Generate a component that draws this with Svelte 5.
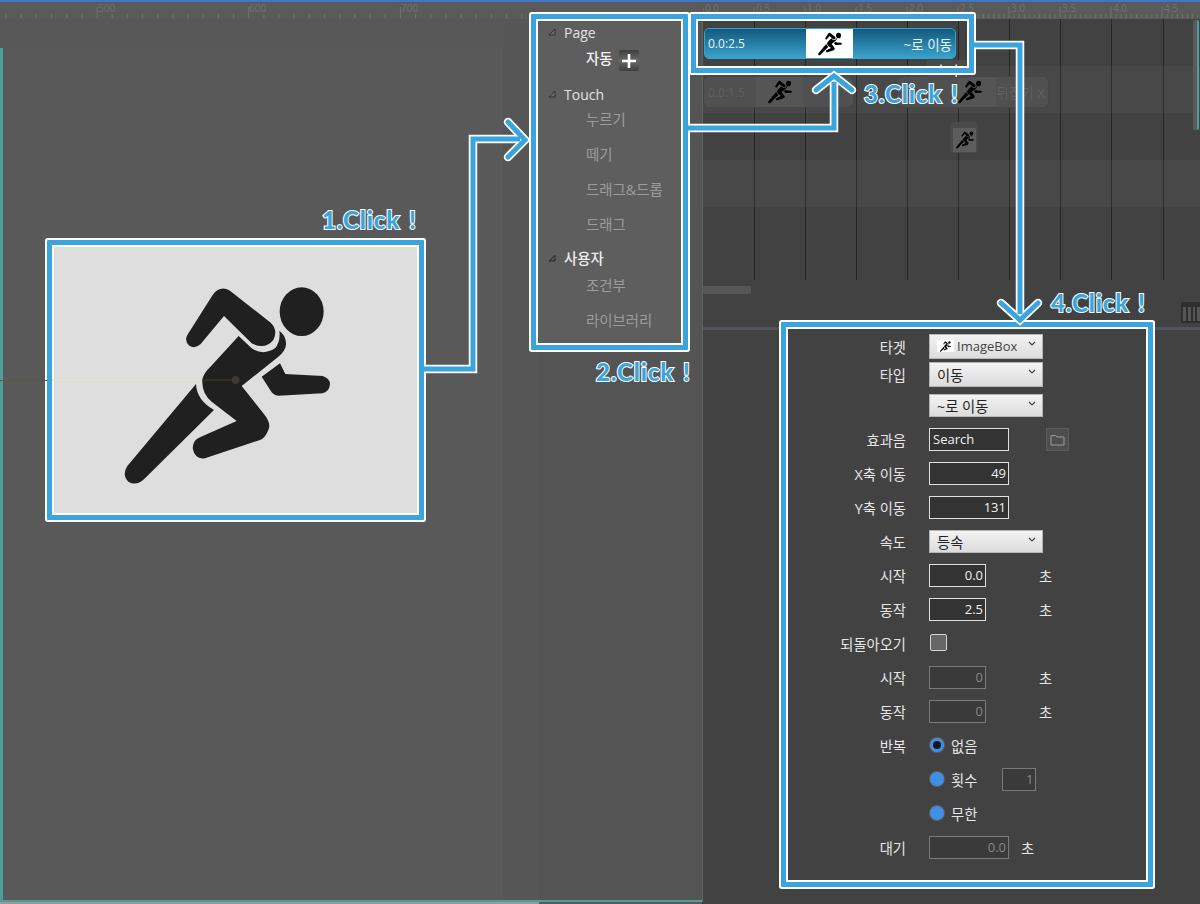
<script>
  const leftTicks = Array.from({ length: 36 }, (_, i) => ({ x: 96 - 90 + i * 15.17, major: (i - 6) % 10 === 0 }));
  const leftLabels = [{ x: 98, t: '500' }, { x: 249, t: '600' }, { x: 401, t: '700' }];
  const rightTicks = Array.from({ length: 100 }, (_, i) => ({ x: i * 5.1, major: i % 10 === 0 }));
  const rightLabels = ['0.0', '0.5', '1.0', '1.5', '2.0', '2.5', '3.0', '3.5', '4.0', '4.5'];
  const gridLines = [51, 102, 153, 204, 255, 306, 357, 408, 460];
</script>

<svg class="defs" width="0" height="0" aria-hidden="true">
  <symbol id="runner" viewBox="280 168 625 600">
    <ellipse cx="815" cy="245" rx="66" ry="73" />
    <path d="M472 315 L548 195 Q570 165 600 182 L722 278 Q745 300 730 330 Q705 360 665 340 L582 258 L512 342 Q495 358 478 347 Q462 332 472 315Z" />
    <path d="M626 318 L665 355 Q700 378 735 355 Q752 335 748 302 Q770 320 768 345 Q765 365 745 380 L635 468 L700 550 Q725 580 715 600 Q705 625 690 630 L525 685 Q495 690 488 655 Q488 630 510 622 L620 573 L545 515 Q515 490 517 450 Q520 430 540 412 Z" />
    <path d="M498 462 Q500 510 552 540 L345 745 Q320 770 295 755 Q275 735 292 708 Z" />
    <path d="M750 400 L766 432 L878 438 Q900 445 900 463 Q898 485 878 490 L745 497 Q730 495 722 482 L695 440 Z" />
  </symbol>
</svg>

<div class="app">
  <header class="rulers">
    <div class="ruler ruler-left">
      <svg width="540" height="17" class="ticks">
        {#each leftTicks as t}
          <line x1={t.x} x2={t.x} y1={t.major ? 5 : 12} y2="16" />
        {/each}
      </svg>
      {#each leftLabels as l}
        <span class="tick-label" style="left:{l.x}px">{l.t}</span>
      {/each}
    </div>
    <div class="ruler">
      <svg width="497" height="17" class="ticks">
        {#each rightTicks as t}
          <line x1={t.x} x2={t.x} y1={t.major ? 5 : 12} y2="16" />
        {/each}
      </svg>
      {#each rightLabels as l, i}
        <span class="tick-label" style="left:{i * 51 + 2}px">{l}</span>
      {/each}
    </div>
  </header>

  <main class="main">
    <section class="canvas">
      <div class="canvas-band"></div>
      <div class="frame image-frame">
        <svg class="runner-art" viewBox="66 45 1101 810">
          <rect x="66" y="448" width="540" height="4" fill="#e6e6bd" />
          <g fill="#202020">
            <use href="#runner" x="280" y="168" width="625" height="600" />
          </g>
          <rect x="517" y="448" width="90" height="4" fill="#3a3a20" />
          <circle cx="617" cy="450" r="13" fill="#3a3a3a" stroke="#33181c" stroke-width="2" />
        </svg>
      </div>
    </section>

    <section class="tools">
      <nav class="frame tree">
        <div class="head first"><svg class="tri" width="8" height="8" viewBox="0 0 8 8"><path d="M1 7L7 1V7Z" fill="#6a6a6a" stroke="#333" /></svg>Page</div>
        <div class="items items-page">
          <div class="item active">자동<span class="plus"><svg width="16" height="16" viewBox="0 0 16 16"><path d="M8 1v14M1 8h14" stroke="#fff" stroke-width="2.6" /></svg></span></div>
        </div>
        <div class="head touch"><svg class="tri" width="8" height="8" viewBox="0 0 8 8"><path d="M1 7L7 1V7Z" fill="#6a6a6a" stroke="#333" /></svg>Touch</div>
        <div class="items items-touch">
          <div class="item">누르기</div>
          <div class="item">떼기</div>
          <div class="item">드래그&드롭</div>
          <div class="item">드래그</div>
        </div>
        <div class="head user"><svg class="tri" width="8" height="8" viewBox="0 0 8 8"><path d="M1 7L7 1V7Z" fill="#555" stroke="#2a2a2a" /></svg><b>사용자</b></div>
        <div class="items items-user">
          <div class="item">조건부</div>
          <div class="item">라이브러리</div>
        </div>
      </nav>
    </section>

    <section class="right">
      <div class="timeline">
        <div class="grid-lines">
          {#each gridLines as x}
            <i class="grid-line" style="left:{x}px"></i>
          {/each}
        </div>
        <div class="track">
          <div class="clip clip-main">
            <span class="clip-time">0.0:2.5</span>
            <span class="clip-icon"><svg width="24" height="24"><use href="#runner" /></svg></span>
            <span class="clip-name">~로 이동</span>
          </div>
        </div>
        <div class="track band">
          <div class="clip clip-dim first-dim">
            <span class="clip-time">0.0:1.5</span>
            <span class="clip-icon"><svg width="24" height="24"><use href="#runner" /></svg></span>
          </div>
          <div class="clip clip-dim second-dim">
            <span class="clip-icon"><svg width="24" height="24"><use href="#runner" /></svg></span>
            <span class="clip-name">뒤집기 X</span>
          </div>
          <span class="fx-tag">효과</span>
        </div>
        <div class="track">
          <div class="tile"><span><svg width="18" height="18"><use href="#runner" /></svg></span></div>
        </div>
        <div class="track band"></div>
        <div class="track"></div>
        <div class="scroll-h"></div>
        <div class="scroll-v"></div>
        <div class="trash"><i></i><i></i><i></i><i></i></div>
      </div>

      <div class="lower">
        <form class="frame props">
          <div class="row h28"><label>타겟</label><div class="select tall"><span class="mini"><svg width="11" height="11"><use href="#runner" /></svg></span><span class="dim">ImageBox</span><svg class="chev" width="8" height="6" viewBox="0 0 8 6"><path d="M1 1l3 3 3-3" fill="none" stroke="#444" stroke-width="1.2" /></svg></div></div>
          <div class="row h28"><label>타입</label><div class="select tall">이동<svg class="chev" width="8" height="6" viewBox="0 0 8 6"><path d="M1 1l3 3 3-3" fill="none" stroke="#444" stroke-width="1.2" /></svg></div></div>
          <div class="row h33"><label></label><div class="select">~로 이동<svg class="chev" width="8" height="6" viewBox="0 0 8 6"><path d="M1 1l3 3 3-3" fill="none" stroke="#444" stroke-width="1.2" /></svg></div></div>
          <div class="row"><label>효과음</label><div class="input wide left">Search</div><span class="folder"><svg width="15" height="13" viewBox="0 0 15 13"><path d="M1 2.5h4.5l1.5 1.5h7v8h-13z" fill="none" stroke="#9a9a9a" /></svg></span></div>
          <div class="row"><label>X축 이동</label><div class="input wide">49</div></div>
          <div class="row"><label>Y축 이동</label><div class="input wide">131</div></div>
          <div class="row"><label>속도</label><div class="select">등속<svg class="chev" width="8" height="6" viewBox="0 0 8 6"><path d="M1 1l3 3 3-3" fill="none" stroke="#444" stroke-width="1.2" /></svg></div></div>
          <div class="row"><label>시작</label><div class="input">0.0</div><span class="unit">초</span></div>
          <div class="row"><label>동작</label><div class="input">2.5</div><span class="unit">초</span></div>
          <div class="row"><label>되돌아오기</label><span class="check"></span></div>
          <div class="row"><label>시작</label><div class="input off">0</div><span class="unit">초</span></div>
          <div class="row"><label>동작</label><div class="input off">0</div><span class="unit">초</span></div>
          <div class="row"><label>반복</label><span class="radio on"></span><span class="radio-text">없음</span></div>
          <div class="row"><label></label><span class="radio"></span><span class="radio-text">횟수</span><div class="input off tiny">1</div></div>
          <div class="row"><label></label><span class="radio"></span><span class="radio-text">무한</span></div>
          <div class="row"><label>대기</label><div class="input wide off">0.0</div><span class="unit near">초</span></div>
        </form>
      </div>
    </section>
  </main>

  <div class="frame frame-clip"></div>

  <svg class="arrows" width="1200" height="904" fill="none" stroke-linejoin="miter">
    <g stroke="#fff" stroke-width="8.5">
      <path d="M424 369H473V139H520" />
      <path d="M508 122L525 140L508 157" stroke-linecap="round" />
      <path d="M688 128H834V82" />
      <path d="M816 90L834 76L852 90" stroke-linecap="round" />
      <path d="M974 45H1020V314" />
      <path d="M1001 303L1020 320L1038 303" stroke-linecap="round" />
    </g>
    <g stroke="#3aa5dc" stroke-width="5">
      <path d="M424 369H473V139H520" />
      <path d="M508 122L525 140L508 157" stroke-linecap="round" />
      <path d="M688 128H834V82" />
      <path d="M816 90L834 76L852 90" stroke-linecap="round" />
      <path d="M974 45H1020V314" />
      <path d="M1001 303L1020 320L1038 303" stroke-linecap="round" />
    </g>
  </svg>

  <span class="note n1">1.Click !</span>
  <span class="note n2">2.Click !</span>
  <span class="note n3">3.Click !</span>
  <span class="note n4">4.Click !</span>
</div>

<style>
  :global(body) { margin: 0; background: #595959; }
  .defs { position: absolute; }

  .app {
    position: relative;
    width: 1200px;
    height: 904px;
    overflow: hidden;
    display: flex;
    flex-direction: column;
    background: #595959;
    font-family: "Open Sans", "Noto Sans CJK KR", sans-serif;
    font-size: 13px;
    color: #e8e8e8;
  }

  /* rulers */
  .rulers {
    display: flex;
    height: 17px;
    flex: none;
    border-top: 2px solid #3b78c9;
    background: #5a5a5a;
  }
  .ruler { position: relative; flex: none; width: 497px; }
  .ruler-left { width: 703px; }
  .ticks { display: block; }
  .ticks line { stroke: #727272; stroke-width: 1; }
  .tick-label {
    position: absolute;
    top: 1px;
    font-size: 10px;
    line-height: 11px;
    color: #727272;
  }

  .main {
    flex: 1;
    min-height: 0;
    display: grid;
    grid-template-columns: 503px 200px 497px;
  }

  /* annotation frame */
  .frame {
    box-sizing: border-box;
    border: 5px solid #3aa5dc;
    box-shadow: 0 0 0 2px #fff, inset 0 0 0 2px #fff;
    border-radius: 1px;
  }

  /* left canvas */
  .canvas {
    position: relative;
    border-left: 3px solid #4f9e9e;
    border-bottom: 2px solid #4f9e9e;
    margin-bottom: 2px;
    background: #595959;
    box-sizing: border-box;
    box-shadow: 0 2px 0 #999;
  }
  .canvas::after {
    content: "";
    position: absolute;
    left: -3px;
    top: 361px;
    width: 47px;
    height: 1px;
    background: #5b5b33;
  }
  .canvas-band { height: 29px; margin-left: -3px; background: #575757; }
  .image-frame {
    width: 377px;
    height: 280px;
    margin: 192px 0 0 44px;
    background: #dedede;
    padding: 0;
  }
  .runner-art { display: block; width: 100%; height: 100%; }

  /* tools column */
  .tools {
    position: relative;
    background: linear-gradient(90deg, #565656 36px, #545454 36px);
    border-bottom: 2px solid #4f9e9e;
    margin-bottom: 2px;
    border-right: 1px solid #626262;
  }
  .tools::after {
    content: "";
    position: absolute;
    left: 0;
    bottom: -4px;
    width: 36px;
    height: 2px;
    background: #999;
  }
  .tree {
    width: 157px;
    height: 336px;
    margin: -5px 0 0 28px;
    box-sizing: border-box;
    background: #5e5e5e;
    padding-top: 2px;
    position: relative;
    z-index: 2;
  }
  .head {
    position: relative;
    height: 24px;
    line-height: 24px;
    padding-left: 28px;
    font-size: 14px;
    color: #e2e2e2;
  }
  .head b { font-weight: 500; color: #ececec; font-size: 14.4px; }
  .head.touch { margin-top: 7px; }
  .head.user { margin-top: 5px; }
  .tri { position: absolute; left: 12px; top: 7px; }
  .items-page { margin-top: -4px; }
  .items-touch { margin-top: -5px; }
  .items-user { margin-top: -3px; }
  .item {
    height: 35px;
    line-height: 35px;
    padding-left: 50px;
    font-size: 14.4px;
    color: #9c9c9c;
    display: flex;
    align-items: center;
  }
  .item.active { color: #f2f2f2; font-weight: 500; }
  .plus {
    display: flex;
    align-items: center;
    justify-content: center;
    width: 20px;
    height: 21px;
    margin: 4px 0 0 7px;
    border-radius: 2px;
    background: linear-gradient(#3e3e3e, #6a6a6a 50%, #3e3e3e);
  }

  /* right column */
  .right { display: flex; flex-direction: column; background: #424242; border-left: 1px solid #383838; box-sizing: border-box; margin-left: -1px; }
  .timeline {
    position: relative;
    height: 308px;
    flex: none;
    border-bottom: 3px solid #52525c;
    box-sizing: content-box;
    margin-bottom: -3px;
  }
  .grid-lines { position: absolute; left: 0; top: 0; width: 100%; height: 261px; }
  .grid-line { position: absolute; top: 0; bottom: 0; width: 1px; background: #262626; }
  .track { position: relative; height: 47px; display: flex; align-items: flex-start; }
  .track.band { background: rgba(255, 255, 255, 0.035); }

  .clip {
    position: relative;
    box-sizing: border-box;
    display: flex;
    align-items: center;
    border-radius: 5px;
    font-size: 12px;
    height: 31px;
  }
  .clip-main {
    width: 252px;
    margin: 9px 0 0 1px;
    border: 1px solid #2ea3d4;
    background: linear-gradient(#13587c, #3aa3cc);
    color: #e8f4fa;
  }
  .clip-main .clip-time { margin-left: 3px; width: 98px; }
  .clip-icon { display: flex; align-items: center; justify-content: center; width: 47px; height: 100%; flex: none; }
  .clip-main .clip-icon { background: #fff; }
  .clip-name { flex: 1; text-align: right; padding-right: 3px; white-space: nowrap; font-size: 13.5px; }
  .clip-dim {
    background: #505050;
    height: 30px;
    margin-top: 11px;
    color: #5f5f5f;
    box-shadow: 0 0 0 1px #464646;
  }
  .first-dim { width: 149px; margin-left: 1px; }
  .first-dim .clip-time { width: 48px; margin-left: 4px; }
  .first-dim .clip-icon { background: #555; }
  .second-dim { width: 150px; margin-left: 45px; padding-left: 60px; }
  .second-dim .clip-icon { width: 38px; background: #555; justify-content: flex-start; }
  .fx-tag {
    position: absolute;
    left: 224px;
    top: -6px;
    width: 40px;
    height: 18px;
    background: #4b4b4b;
    text-align: center;
    color: #fff;
    line-height: 20px;
    overflow: hidden;
  }
  .tile {
    box-sizing: border-box;
    width: 28px;
    height: 31px;
    margin: 9px 0 0 247px;
    padding: 6px 2px 1px 3px;
    border-radius: 4px;
    background: #4a4a4a;
  }
  .tile span { display: flex; align-items: center; justify-content: center; height: 100%; background: #5d5d5d; }
  .scroll-h {
    position: absolute;
    left: 0;
    top: 267px;
    width: 48px;
    height: 8px;
    border-radius: 2px;
    background: #575757;
  }
  .scroll-v {
    position: absolute;
    right: 1px;
    top: 1px;
    width: 6px;
    height: 110px;
    border-radius: 2px;
    background: linear-gradient(90deg, #5a5a5a 60%, #4f9e9e 60%);
  }
  .trash {
    position: absolute;
    right: 0;
    top: 283px;
    width: 19px;
    height: 21px;
    box-sizing: border-box;
    padding: 5px 0 2px 2px;
    display: flex;
    gap: 2px;
    background: #2f2f2f;
  }
  .trash i { flex: 1; background: #565656; }

  .lower { flex: 1; position: relative; z-index: 2; }
  .props {
    width: 372px;
    height: 565px;
    margin: -5px 0 0 78px;
    background: #424242;
    padding-top: 5px;
    position: relative;
  }
  .row { height: 34px; display: flex; align-items: center; }
  .row.h28 { height: 28px; }
  .row.h33 { height: 34px; }
  .row label {
    width: 120px;
    flex: none;
    margin-right: 23px;
    text-align: right;
    font-size: 14.3px;
    font-weight: 400;
    color: #e6e6e6;
  }
  .select {
    position: relative;
    box-sizing: border-box;
    width: 114px;
    height: 23px;
    padding-left: 7px;
    display: flex;
    align-items: center;
    gap: 3px;
    border: 1px solid #b5b5b5;
    background: linear-gradient(#f3f3f3, #dcdcdc);
    color: #222;
    font-size: 14.3px;
    white-space: nowrap;
  }
  .select.tall { height: 25px; }
  .chev { position: absolute; right: 6px; top: 6px; }
  .mini { display: flex; width: 17px; height: 12px; align-items: center; justify-content: center; background: #fff; }
  .dim { color: #444; font-size: 13px; }
  .input {
    box-sizing: border-box;
    width: 57px;
    height: 23px;
    padding: 0 2px;
    line-height: 21px;
    text-align: right;
    border: 1px solid #e0e0e0;
    background: #333;
    color: #f0f0f0;
    font-size: 13px;
  }
  .input.wide { width: 80px; }
  .input.left { text-align: left; padding-left: 3px; }
  .input.off { border-color: #7a7a7a; background: #3a3a3a; color: #888; }
  .input.tiny { width: 34px; margin-left: 25px; }
  .unit { margin-left: 53px; font-size: 14.3px; color: #e6e6e6; }
  .unit.near { margin-left: 12px; }
  .folder {
    box-sizing: border-box;
    width: 23px;
    height: 23px;
    margin-left: 37px;
    display: flex;
    align-items: center;
    justify-content: center;
    border: 1px solid #5c5c5c;
    background: #4e4e4e;
  }
  .check {
    box-sizing: border-box;
    width: 17px;
    height: 17px;
    margin: -2px 0 0 1px;
    border: 1px solid #d4d4d4;
    border-radius: 2px;
    background: #666;
  }
  .radio {
    box-sizing: border-box;
    width: 14px;
    height: 14px;
    margin-left: 1px;
    border-radius: 50%;
    background: #3f8fe8;
    box-shadow: 0 0 0 1px #5f5f5f;
  }
  .radio.on { border: 3px solid #3f8fe8; background: #15171c; }
  .radio-text { margin-left: 7px; font-size: 14.3px; color: #e6e6e6; }

  .frame-clip {
    position: absolute;
    left: 691px;
    top: 14px;
    width: 283px;
    height: 59px;
    z-index: 3;
    pointer-events: none;
  }
  .arrows { position: absolute; left: 0; top: 0; z-index: 3; pointer-events: none; }
  .note {
    position: absolute;
    z-index: 4;
    font-family: Lato, "Open Sans", sans-serif;
    font-weight: 900;
    font-size: 24px;
    line-height: 24px;
    letter-spacing: 0.9px;
    word-spacing: 2px;
    color: #3aa5dc;
    -webkit-text-stroke: 2px #fff;
    paint-order: stroke fill;
    white-space: nowrap;
  }
  .n1 { left: 322px; top: 208px; }
  .n2 { left: 596px; top: 360px; }
  .n3 { left: 864px; top: 82px; }
  .n4 { left: 1051px; top: 291px; }
</style>
